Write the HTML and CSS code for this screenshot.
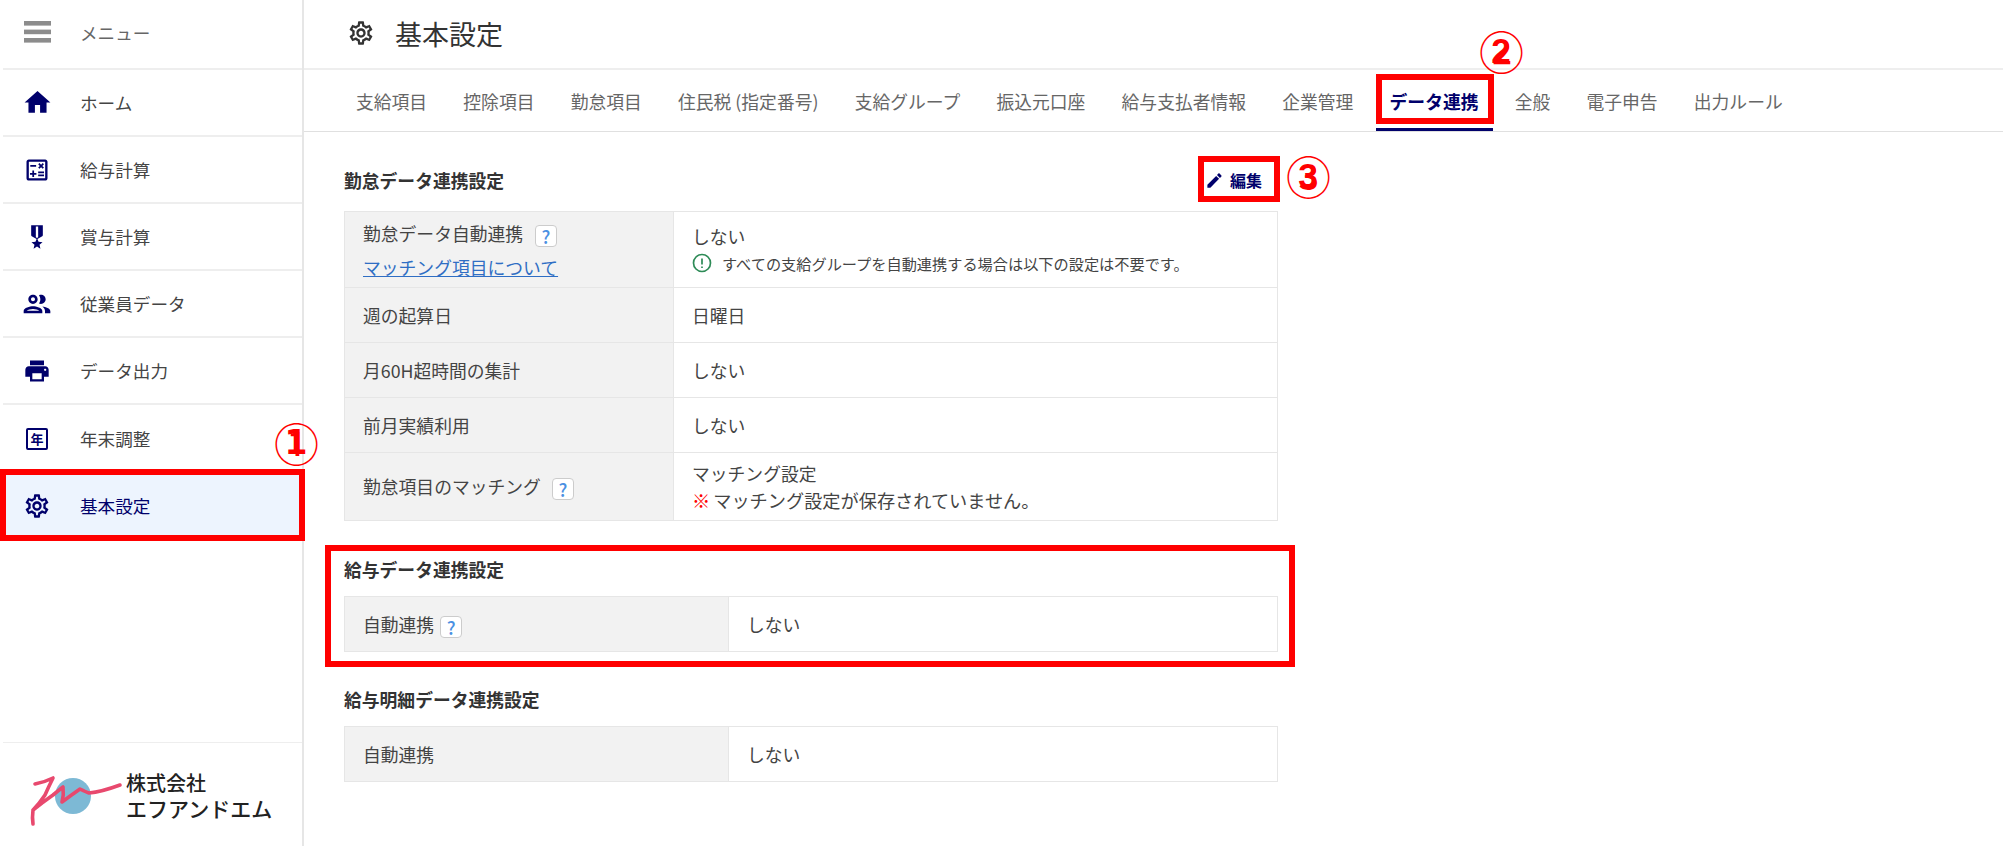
FILE: index.html
```html
<!DOCTYPE html>
<html lang="ja">
<head>
<meta charset="utf-8">
<title>基本設定</title>
<link rel="stylesheet" href="styles.css">
</head>
<body>
<div class="app">
  <aside class="sidebar">
    <nav class="side-nav">
      <a class="side-item side-item-top">
        <span class="side-icon"><svg class="burger" viewBox="0 0 27 22"><rect y="0" width="27" height="4.6"/><rect y="8.6" width="27" height="4.6"/><rect y="17" width="27" height="4.6"/></svg></span>
        <span class="side-label side-label-muted">メニュー</span>
      </a>
      <a class="side-item">
        <span class="side-icon"><svg class="ic ic-home" viewBox="0 0 24 24"><path d="M10 20v-6h4v6h5v-8h3L12 3 2 12h3v8z"/></svg></span>
        <span class="side-label">ホーム</span>
      </a>
      <a class="side-item">
        <span class="side-icon"><svg class="ic" viewBox="0 0 24 24"><path d="M19 3H5c-1.1 0-2 .9-2 2v14c0 1.1.9 2 2 2h14c1.1 0 2-.9 2-2V5c0-1.1-.9-2-2-2zm0 16H5V5h14v14z"/><path d="M6.25 7.72h5v1.5h-5zM13 15.75h5v1.5h-5zM13 13.25h5v1.5h-5zM8 18h1.5v-2h2v-1.5h-2v-2H8v2H6V16h2zM14.09 10.95l1.41-1.41 1.41 1.41 1.06-1.06-1.41-1.42 1.41-1.41L16.91 6 15.5 7.41 14.09 6l-1.06 1.06 1.41 1.41-1.41 1.42z"/></svg></span>
        <span class="side-label">給与計算</span>
      </a>
      <a class="side-item">
        <span class="side-icon"><svg class="ic" viewBox="0 0 24 24"><path d="M17 10.43V2H7v8.43c0 .35.18.68.49.86l4.18 2.51-.99 2.34-3.41.29 2.59 2.24L9.07 22 12 20.23 14.93 22l-.78-3.33 2.59-2.24-3.41-.29-.99-2.34 4.18-2.51c.3-.18.48-.5.48-.86zm-4 1.8l-1 .6-1-.6V3h2v9.23z"/></svg></span>
        <span class="side-label">賞与計算</span>
      </a>
      <a class="side-item">
        <span class="side-icon"><svg class="ic ic-people" viewBox="0 0 24 24"><path d="M9 13.75c-2.34 0-7 1.17-7 3.5V19h14v-1.75c0-2.33-4.66-3.5-7-3.5zM4.34 17c.84-.58 2.87-1.25 4.66-1.25s3.82.67 4.66 1.25H4.34zM9 12c1.93 0 3.5-1.57 3.5-3.5S10.93 5 9 5 5.5 6.57 5.5 8.5 7.07 12 9 12zm0-5c.83 0 1.5.67 1.5 1.5S9.83 10 9 10s-1.5-.67-1.5-1.5S8.17 7 9 7zm7.04 6.81c1.16.84 1.96 1.96 1.96 3.44V19h4v-1.75c0-2.02-3.5-3.17-5.96-3.44zM15 12c1.93 0 3.5-1.57 3.5-3.5S16.93 5 15 5c-.54 0-1.04.13-1.5.35.63.89 1 1.98 1 3.15s-.37 2.26-1 3.15c.46.22.96.35 1.5.35z"/></svg></span>
        <span class="side-label">従業員データ</span>
      </a>
      <a class="side-item">
        <span class="side-icon"><svg class="ic" viewBox="0 0 24 24"><path d="M19 8H5c-1.66 0-3 1.34-3 3v6h4v4h12v-4h4v-6c0-1.66-1.34-3-3-3zm-3 11H8v-5h8v5zm3-7c-.55 0-1-.45-1-1s.45-1 1-1 1 .45 1 1-.45 1-1 1zm-1-9H6v4h12V3z"/></svg></span>
        <span class="side-label">データ出力</span>
      </a>
      <a class="side-item side-item-plain">
        <span class="side-icon"><span class="year-box">年</span></span>
        <span class="side-label">年末調整</span>
      </a>
      <a class="side-item side-item-active">
        <span class="side-icon"><svg class="ic" viewBox="0 0 24 24"><path d="M19.43 12.98c.04-.32.07-.64.07-.98 0-.34-.03-.66-.07-.98l2.11-1.65c.19-.15.24-.42.12-.64l-2-3.46c-.09-.16-.26-.25-.44-.25-.06 0-.12.01-.17.03l-2.49 1c-.52-.4-1.08-.73-1.69-.98l-.38-2.65C14.46 2.18 14.25 2 14 2h-4c-.25 0-.46.18-.49.42l-.38 2.65c-.61.25-1.17.59-1.69.98l-2.49-1c-.06-.02-.12-.03-.18-.03-.17 0-.34.09-.43.25l-2 3.46c-.13.22-.07.49.12.64l2.11 1.65c-.04.32-.07.65-.07.98 0 .33.03.66.07.98l-2.11 1.65c-.19.15-.24.42-.12.64l2 3.46c.09.16.26.25.44.25.06 0 .12-.01.17-.03l2.49-1c.52.4 1.08.73 1.69.98l.38 2.65c.03.24.24.42.49.42h4c.25 0 .46-.18.49-.42l.38-2.65c.61-.25 1.17-.59 1.69-.98l2.49 1c.06.02.12.03.18.03.17 0 .34-.09.43-.25l2-3.46c.12-.22.07-.49-.12-.64l-2.11-1.65zm-1.98-1.71c.04.31.05.52.05.73 0 .21-.02.43-.05.73l-.14 1.13.89.7 1.08.84-.7 1.21-1.27-.51-1.04-.42-.9.68c-.43.32-.84.56-1.25.73l-1.06.43-.16 1.13-.2 1.35h-1.4l-.19-1.35-.16-1.13-1.06-.43c-.43-.18-.83-.41-1.23-.71l-.91-.7-1.06.43-1.27.51-.7-1.21 1.08-.84.89-.7-.14-1.13c-.03-.31-.05-.54-.05-.74s.02-.43.05-.73l.14-1.13-.89-.7-1.08-.84.7-1.21 1.27.51 1.04.42.9-.68c.43-.32.84-.56 1.25-.73l1.06-.43.16-1.13.2-1.35h1.39l.19 1.35.16 1.13 1.06.43c.43.18.83.41 1.23.71l.91.7 1.06-.43 1.27-.51.7 1.21-1.07.85-.89.7.14 1.13zM12 8c-2.21 0-4 1.79-4 4s1.79 4 4 4 4-1.79 4-4-1.79-4-4-4zm0 6c-1.1 0-2-.9-2-2s.9-2 2-2 2 .9 2 2-.9 2-2 2z"/></svg></span>
        <span class="side-label">基本設定</span>
      </a>
    </nav>
    <div class="logo">
      <svg class="logo-mark" viewBox="0 0 100 56">
        <circle class="logo-disc" cx="47" cy="28" r="18"/>
        <path class="logo-line" d="M9 16 Q19 14 27 10 Q23 18 19 27 Q13 36 7 42 Q6 50 7 56 M7 42 Q17 34 27 27 Q33 22 37 19 Q38 27 36 34 Q44 28 54 21 Q60 24 63 25 Q75 24 94 17"/>
      </svg>
      <div class="logo-text">
        <span class="logo-top">株式会社</span>
        <span class="logo-bottom">エフアンドエム</span>
      </div>
    </div>
  </aside>

  <main class="main">
    <header class="page-head">
      <svg class="head-gear" viewBox="0 0 24 24"><path d="M19.43 12.98c.04-.32.07-.64.07-.98 0-.34-.03-.66-.07-.98l2.11-1.65c.19-.15.24-.42.12-.64l-2-3.46c-.09-.16-.26-.25-.44-.25-.06 0-.12.01-.17.03l-2.49 1c-.52-.4-1.08-.73-1.69-.98l-.38-2.65C14.46 2.18 14.25 2 14 2h-4c-.25 0-.46.18-.49.42l-.38 2.65c-.61.25-1.17.59-1.69.98l-2.49-1c-.06-.02-.12-.03-.18-.03-.17 0-.34.09-.43.25l-2 3.46c-.13.22-.07.49.12.64l2.11 1.65c-.04.32-.07.65-.07.98 0 .33.03.66.07.98l-2.11 1.65c-.19.15-.24.42-.12.64l2 3.46c.09.16.26.25.44.25.06 0 .12-.01.17-.03l2.49-1c.52.4 1.08.73 1.69.98l.38 2.65c.03.24.24.42.49.42h4c.25 0 .46-.18.49-.42l.38-2.65c.61-.25 1.17-.59 1.69-.98l2.49 1c.06.02.12.03.18.03.17 0 .34-.09.43-.25l2-3.46c.12-.22.07-.49-.12-.64l-2.11-1.65zm-1.98-1.71c.04.31.05.52.05.73 0 .21-.02.43-.05.73l-.14 1.13.89.7 1.08.84-.7 1.21-1.27-.51-1.04-.42-.9.68c-.43.32-.84.56-1.25.73l-1.06.43-.16 1.13-.2 1.35h-1.4l-.19-1.35-.16-1.13-1.06-.43c-.43-.18-.83-.41-1.23-.71l-.91-.7-1.06.43-1.27.51-.7-1.21 1.08-.84.89-.7-.14-1.13c-.03-.31-.05-.54-.05-.74s.02-.43.05-.73l.14-1.13-.89-.7-1.08-.84.7-1.21 1.27.51 1.04.42.9-.68c.43-.32.84-.56 1.25-.73l1.06-.43.16-1.13.2-1.35h1.39l.19 1.35.16 1.13 1.06.43c.43.18.83.41 1.23.71l.91.7 1.06-.43 1.27-.51.7 1.21-1.07.85-.89.7.14 1.13zM12 8c-2.21 0-4 1.79-4 4s1.79 4 4 4 4-1.79 4-4-1.79-4-4-4zm0 6c-1.1 0-2-.9-2-2s.9-2 2-2 2 .9 2 2-.9 2-2 2z"/></svg>
      <h1 class="page-title">基本設定</h1>
    </header>
    <nav class="tabs">
      <a class="tab">支給項目</a>
      <a class="tab">控除項目</a>
      <a class="tab">勤怠項目</a>
      <a class="tab">住民税 (指定番号)</a>
      <a class="tab">支給グループ</a>
      <a class="tab">振込元口座</a>
      <a class="tab">給与支払者情報</a>
      <a class="tab">企業管理</a>
      <a class="tab tab-active">データ連携</a>
      <a class="tab">全般</a>
      <a class="tab">電子申告</a>
      <a class="tab">出力ルール</a>
    </nav>
    <div class="content">
      <section class="block block-first">
        <div class="block-head">
          <h2 class="block-title">勤怠データ連携設定</h2>
          <button class="edit-btn">
            <svg class="edit-icon" viewBox="0 0 24 24"><path d="M3 17.25V21h3.75L17.81 9.94l-3.75-3.75L3 17.25zM20.71 7.04c.39-.39.39-1.02 0-1.41l-2.34-2.34c-.39-.39-1.02-.39-1.41 0l-1.83 1.83 3.75 3.75 1.83-1.83z"/></svg>
            <span>編集</span>
          </button>
        </div>
        <table class="info-table">
          <tr class="row-auto">
            <th>
              <div class="th-line">勤怠データ自動連携<span class="help help-a">?</span></div>
              <div class="th-link"><a class="link">マッチング項目について</a></div>
            </th>
            <td>
              <div class="td-line">しない</div>
              <div class="note">
                <svg class="note-icon" viewBox="0 0 20 20"><circle cx="10" cy="10" r="8.5"/><path d="M10 5.5v6M10 13.4v1.6"/></svg>
                <span>すべての支給グループを自動連携する場合は以下の設定は不要です。</span>
              </div>
            </td>
          </tr>
          <tr class="row-std"><th>週の起算日</th><td>日曜日</td></tr>
          <tr class="row-std"><th>月60H超時間の集計</th><td>しない</td></tr>
          <tr class="row-std"><th>前月実績利用</th><td>しない</td></tr>
          <tr class="row-match">
            <th>勤怠項目のマッチング<span class="help help-b">?</span></th>
            <td>
              <div class="td-line">マッチング設定</div>
              <div class="td-line td-line-warn"><span class="mark">※</span>マッチング設定が保存されていません。</div>
            </td>
          </tr>
        </table>
      </section>

      <section class="block block-second">
        <div class="block-head"><h2 class="block-title">給与データ連携設定</h2></div>
        <table class="info-table info-table-wide">
          <tr class="row-std"><th>自動連携<span class="help help-c">?</span></th><td>しない</td></tr>
        </table>
      </section>

      <section class="block block-third">
        <div class="block-head"><h2 class="block-title">給与明細データ連携設定</h2></div>
        <table class="info-table info-table-wide">
          <tr class="row-std"><th>自動連携</th><td>しない</td></tr>
        </table>
      </section>
    </div>
  </main>
</div>

<div class="callout callout-side"></div>
<div class="callout callout-tab"></div>
<div class="callout callout-edit"></div>
<div class="callout callout-block"></div>
<span class="num num-1">①</span>
<span class="num num-2">②</span>
<span class="num num-3">③</span>
</body>
</html>
```

FILE: styles.css
```css
* { box-sizing: border-box; }
html, body { margin: 0; padding: 0; background: #fff; }
body {
  position: relative;
  width: 2003px;
  height: 846px;
  overflow: hidden;
  font-family: "Noto Sans CJK JP", "Noto Sans", sans-serif;
  font-size: 17.8px;
  color: #444;
}
.app { display: flex; height: 846px; }

/* sidebar */
.sidebar {
  width: 304px;
  flex: none;
  display: flex;
  flex-direction: column;
  border-right: 2px solid #e6e6e6;
}
.side-nav { display: flex; flex-direction: column; }
.side-item {
  display: flex;
  align-items: center;
  height: 67px;
  margin-left: 3px;
  padding-left: 19px;
  border-bottom: 2px solid #eee;
  font-size: 17.6px;
}
.side-item-top { height: 70px; padding-bottom: 4px; }
.side-item-plain { border-bottom: none; }
.side-item-active { border-bottom: none; background: #edf4fe; color: #00006b; }
.side-icon {
  width: 30px;
  height: 30px;
  margin-right: 28px;
  flex: none;
  display: flex;
  align-items: center;
  justify-content: center;
}
.burger { width: 27px; height: 22px; fill: #8c8c8c; }
.ic { width: 28px; height: 28px; fill: #00006b; flex: none; }
.ic-home { width: 31px; height: 31px; }
.ic-people { width: 32px; height: 32px; }
.year-box {
  width: 22px;
  height: 22px;
  border: 2px solid #00006b;
  border-radius: 2px;
  color: #00006b;
  font-size: 13px;
  font-weight: 700;
  line-height: 18px;
  text-align: center;
}
.side-label { white-space: nowrap; }
.side-label-muted { color: #666; }

.logo {
  margin-top: auto;
  height: 104px;
  margin-left: 3px;
  border-top: 1px solid #eee;
  display: flex;
  align-items: flex-start;
}
.logo-mark { width: 100px; height: 56px; margin: 25px 0 0 23px; flex: none; overflow: visible; }
.logo-disc { fill: #7db9d5; }
.logo-line { fill: none; stroke: #e8496e; stroke-width: 3.6; stroke-linecap: round; stroke-linejoin: round; }
.logo-text { display: flex; flex-direction: column; margin: 27px 0 0 0; color: #222; white-space: nowrap; }
.logo-top { font-size: 20px; line-height: 26px; font-weight: 500; }
.logo-bottom { font-size: 21px; line-height: 24px; font-weight: 500; }

/* header */
.main { flex: 1; min-width: 0; }
.page-head {
  height: 70px;
  display: flex;
  align-items: center;
  padding: 0 0 2px 43px;
  border-bottom: 2px solid #eee;
}
.head-gear { width: 28px; height: 28px; fill: #333; margin-right: 20px; }
.page-title { margin: 0; font-size: 27px; font-weight: 400; color: #333; line-height: 1; }

.tabs {
  height: 62px;
  display: flex;
  gap: 8.2px;
  padding-left: 38px;
  border-bottom: 1px solid #e0e0e0;
}
.tab {
  display: flex;
  align-items: center;
  height: 61px;
  padding: 0 14px 0;
  color: #666;
  white-space: nowrap;
}
.tab-active { color: #00006b; font-weight: 700; border-bottom: 3px solid #00006b; padding-top: 3px; }

/* content */
.content { padding: 32px 0 0 40px; }
.block-head {
  width: 934px;
  height: 32px;
  display: flex;
  align-items: center;
  justify-content: space-between;
}
.block-first .block-head { margin-bottom: 15px; }
.block-second { margin-top: 32px; }
.block-second .block-head { margin-bottom: 11px; }
.block-third { margin-top: 31px; }
.block-third .block-head { margin-bottom: 11px; }
.block-title { margin: 0; font-size: 17.8px; font-weight: 700; color: #333; line-height: 32px; }

.edit-btn {
  display: flex;
  align-items: center;
  gap: 6px;
  margin-right: 16px;
  padding: 0;
  border: 0;
  background: none;
  font: inherit;
  font-size: 16px;
  font-weight: 700;
  color: #00006b;
}
.edit-icon { width: 19px; height: 19px; fill: #00006b; }

.info-table {
  width: 934px;
  table-layout: fixed;
  border-collapse: collapse;
}
.info-table th, .info-table td {
  border: 1.5px solid #e6e6e6;
  text-align: left;
  font-weight: 400;
  padding: 0 18px;
  line-height: 27px;
  vertical-align: middle;
}
.info-table th { width: 329px; background: #f2f2f2; }
.info-table-wide th { width: 384px; }
.row-auto { height: 76px; }
.row-std { height: 55px; }
.row-match { height: 68px; }
.th-line { line-height: 28px; }
.th-link { line-height: 28px; margin-top: 6px; }
.link { color: #2f6ec4; text-decoration: underline; }
.td-line { line-height: 27px; }
.td-line-warn { font-size: 18.2px; }
.note { display: flex; align-items: center; font-size: 15.2px; line-height: 27px; gap: 10px; }
.note-icon { width: 20px; height: 20px; fill: none; stroke: #2e8b57; stroke-width: 1.7; flex: none; }
.mark { color: #f00; margin-right: 3px; }
.help {
  display: inline-block;
  width: 22px;
  height: 22px;
  border: 1px solid #ccc;
  border-radius: 4px;
  background: #fff;
  color: #4a90e2;
  font-weight: 500;
  font-size: 18px;
  line-height: 20px;
  text-align: center;
  vertical-align: -3px;
}
.help-a { margin-left: 12px; }
.help-b { margin-left: 11px; }
.help-c { margin-left: 6px; }

/* red annotations laid over the screenshot */
.callout { position: absolute; border: 6px solid #f00; pointer-events: none; }
.callout-side { left: 0; top: 469px; width: 305px; height: 72px; }
.callout-tab { left: 1376px; top: 74px; width: 118px; height: 50px; }
.callout-edit { left: 1198px; top: 156px; width: 82px; height: 46px; }
.callout-block { left: 325px; top: 545px; width: 970px; height: 122px; }
.num {
  position: absolute;
  width: 44px;
  height: 44px;
  color: #f00;
  font-size: 45px;
  font-weight: 400;
  line-height: 44px;
  text-align: center;
}
.num::after {
  position: absolute;
  inset: 0;
  font-family: "Liberation Sans", sans-serif;
  font-size: 35px;
  font-weight: 700;
  line-height: 44px;
  text-align: center;
}
.num-1::after { content: "1"; font-family: "DejaVu Sans", sans-serif; font-size: 33px; }
.num-2::after { content: "2"; }
.num-3::after { content: "3"; }
.num-1 { left: 274px; top: 421px; }
.num-2 { left: 1479px; top: 29px; }
.num-3 { left: 1286px; top: 154px; }
```
